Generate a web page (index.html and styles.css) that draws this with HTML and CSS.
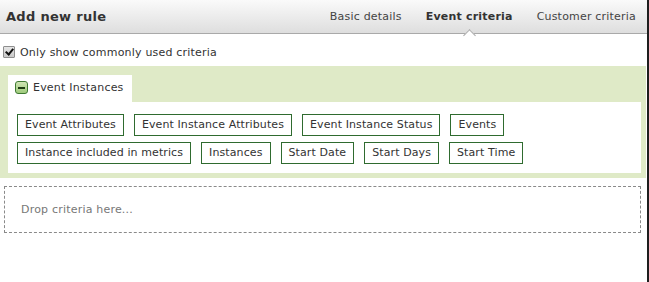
FILE: index.html
```html
<!DOCTYPE html>
<html>

<head>
    <meta charset="utf-8">
    <title>Add new rule</title>
    <link rel="stylesheet" href="styles.css">
</head>

<body>
    <div class="wrap">
        <div class="kopf">
            <div class="titel">Add new rule</div>
            <div class="reiter">
                <span class="reiter-item">Basic details</span>
                <span class="reiter-item aktiv">Event criteria</span>
                <span class="reiter-item">Customer criteria</span>
            </div>
        </div>

        <label class="option">
            <input type="checkbox" checked> Only show commonly used criteria
        </label>

        <div class="gruppe">
            <div class="gruppe-tab">
                <span class="minus"></span>Event Instances
            </div>
            <div class="gruppe-inhalt">
                <span class="kriterium">Event Attributes</span>
                <span class="kriterium">Event Instance Attributes</span>
                <span class="kriterium">Event Instance Status</span>
                <span class="kriterium">Events</span>
                <span class="kriterium">Instance included in metrics</span>
                <span class="kriterium">Instances</span>
                <span class="kriterium">Start Date</span>
                <span class="kriterium">Start Days</span>
                <span class="kriterium">Start Time</span>
            </div>
        </div>

        <div class="ablage">Drop criteria here...</div>
    </div>
</body>

</html>
```

FILE: styles.css
```css
body {
    margin: 0;
    font-family: "DejaVu Sans", Verdana, sans-serif;
    font-size: 11px;
    letter-spacing: 0.2px;
    color: #333;
    background: #fff;
}

.wrap {
    width: 647px;
    min-height: 282px;
    border-right: 2px solid #1e1e1e;
}

.kopf {
    height: 33px;
    display: flex;
    align-items: center;
    justify-content: space-between;
    background: linear-gradient(#fafafa, #dedede);
    border-bottom: 1px solid #a9a9a9;
}

.titel {
    padding-left: 6px;
    font-size: 13px;
    font-weight: bold;
    letter-spacing: 0.3px;
    color: #333;
}

.reiter {
    display: flex;
    gap: 24px;
    padding-right: 11px;
    color: #444;
}

.reiter-item {
    position: relative;
}

.aktiv {
    font-weight: bold;
    color: #333;
}

.aktiv::after {
    content: "";
    position: absolute;
    left: 50%;
    bottom: -17px;
    width: 8px;
    height: 8px;
    margin-left: -4px;
    background: #fff;
    border-left: 1px solid #a9a9a9;
    border-top: 1px solid #a9a9a9;
    transform: rotate(45deg);
}

.option {
    display: flex;
    align-items: center;
    height: 28px;
    padding: 4px 0 0 3px;
    color: #333;
}

.option input {
    appearance: none;
    position: relative;
    margin: 0 5px 0 0;
    width: 12px;
    height: 12px;
    border: 1px solid #8e8e8e;
    border-radius: 1px;
    background: linear-gradient(#e6e6e6, #c9c9c9);
}

.option input:checked::after {
    content: "";
    position: absolute;
    left: 3px;
    top: 0px;
    width: 3px;
    height: 6px;
    border-right: 2px solid #111;
    border-bottom: 2px solid #111;
    transform: rotate(40deg);
}

.gruppe {
    background: #dfeac7;
    padding: 9px 5px 5px 8px;
    margin-right: 1px;
}

.gruppe-tab {
    display: inline-flex;
    align-items: center;
    height: 27px;
    padding: 0 8px 2px 7px;
    box-sizing: border-box;
    background: #fff;
}

.minus {
    display: inline-block;
    width: 11px;
    height: 11px;
    margin-right: 5px;
    border: 1px solid #3f7a32;
    border-radius: 3px;
    background: linear-gradient(#cfe5b4, #9fca7c);
    position: relative;
}

.minus::after {
    content: "";
    position: absolute;
    left: 2px;
    right: 2px;
    top: 5px;
    height: 2px;
    background: #1f3d14;
}

.gruppe-inhalt {
    background: #fff;
    padding: 12px 9px 9px 9px;
    display: flex;
    flex-wrap: wrap;
    gap: 6px 10px;
}

.kriterium {
    display: inline-block;
    height: 20px;
    line-height: 20px;
    padding: 0 7px;
    border: 1px solid #2f6b2f;
    letter-spacing: 0.1px;
    color: #333;
}

.ablage {
    margin: 8px 6px 0 4px;
    height: 45px;
    line-height: 45px;
    padding-left: 16px;
    border: 1px dashed #8a8a8a;
    color: #777;
}
```
